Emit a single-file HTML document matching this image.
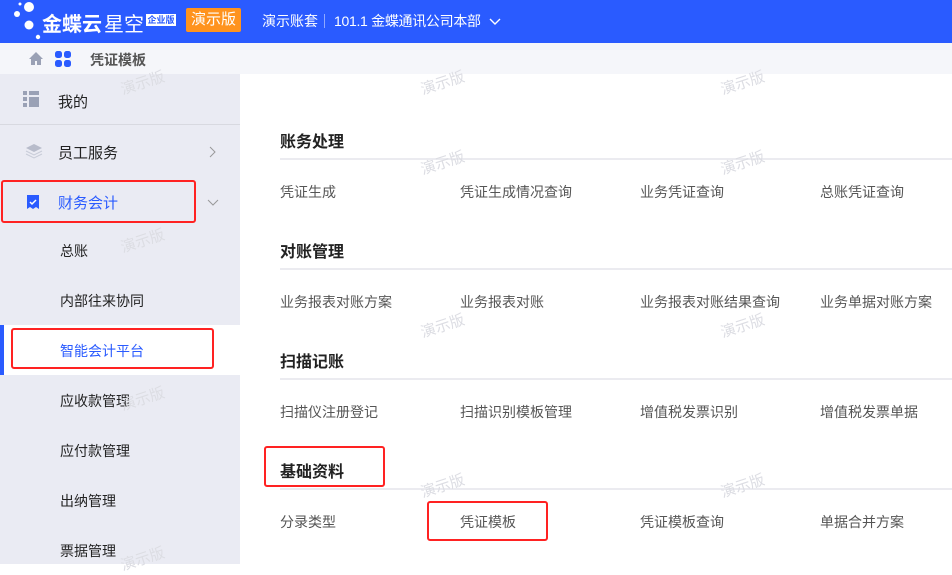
<!DOCTYPE html><html><head><meta charset="utf-8"><style>
*{margin:0;padding:0;box-sizing:border-box}
body{width:952px;height:564px;overflow:hidden;font-family:"Liberation Sans","Noto Sans CJK SC",sans-serif;background:#fff;position:relative}
.a{position:absolute;white-space:nowrap}
.hd{position:absolute;left:0;top:0;width:952px;height:43px;background:#2a5bff}
.bc{position:absolute;left:0;top:43px;width:952px;height:31px;background:#f5f6fa}
.sb{position:absolute;left:0;top:74px;width:240px;height:490px;background:#eaebf3}
.t{font-size:16px;font-weight:bold;color:#222}
.i{font-size:14px;color:#555}
.ln{position:absolute;left:280px;width:672px;height:2px;background:#ebebf0}
.s{font-size:14px;color:#222}
.red{position:absolute;border:2px solid #f22;border-radius:3px}
.wm{position:absolute;color:#dcdde3;font-size:15px;transform:rotate(-18deg)}
</style></head><body>
<div class="hd"></div>
<svg class="a" style="left:12px;top:0px" width="32" height="42"><circle cx="17" cy="7" r="5" fill="#fff"/><circle cx="5" cy="14" r="3" fill="#fff"/><circle cx="17" cy="25" r="4.5" fill="#fff"/><circle cx="26" cy="37" r="2.2" fill="#fff"/><circle cx="8" cy="4" r="1.5" fill="#fff"/></svg>
<div class="a" style="left:42px;top:8px;color:#fff;font-size:20px;font-weight:bold">金蝶云</div>
<div class="a" style="left:104px;top:8px;color:#fff;font-size:20px">星空</div>
<div class="a" style="left:146px;top:14px;width:30px;height:12px;background:#fff;color:#2a5bff;font-size:9px;line-height:12px;text-align:center;font-weight:bold">企业版</div>
<div class="a" style="left:186px;top:8px;width:55px;height:24px;background:#ff931e;border-radius:2px;color:#fff;font-size:15px;line-height:24px;text-align:center">演示版</div>
<div class="a" style="left:262px;top:11px;color:#fff;font-size:14px">演示账套</div>
<div class="a" style="left:324px;top:14px;width:1px;height:14px;background:#8fa8ff"></div>
<div class="a" style="left:334px;top:11px;color:#fff;font-size:14px;letter-spacing:-0.3px">101.1 金蝶通讯公司本部</div>
<svg class="a" style="left:489px;top:18px" width="12" height="8"><path d="M1 1l5 5 5-5" stroke="#fff" fill="none" stroke-width="1.4"/></svg>
<div class="bc"></div>
<svg class="a" style="left:28px;top:51px" width="16" height="15"><path d="M8 1L1 8h2v6h4v-4h2v4h4V8h2z" fill="#9aa1b5"/></svg>
<svg class="a" style="left:55px;top:51px" width="16" height="16" fill="#2a5bff"><rect x="0" y="0" width="7" height="7" rx="2.5"/><rect x="9" y="0" width="7" height="7" rx="2.5"/><rect x="0" y="9" width="7" height="7" rx="2.5"/><rect x="9" y="9" width="7" height="7" rx="2.5"/></svg>
<div class="a" style="left:90px;top:50px;font-size:14px;font-weight:bold;color:#555">凭证模板</div>
<div class="sb"></div>
<svg class="a" style="left:23px;top:91px" width="16" height="16" fill="#9aa1b5"><rect x="0" y="0" width="4" height="4"/><rect x="6" y="0" width="10" height="4"/><rect x="0" y="6" width="4" height="4"/><rect x="6" y="6" width="10" height="10"/><rect x="0" y="12" width="4" height="4"/></svg>
<div class="a s" style="left:58px;top:91px;font-size:15px">我的</div>
<div class="a" style="left:0;top:124px;width:240px;height:1px;background:#d8d9e0"></div>
<svg class="a" style="left:25px;top:143px" width="18" height="16"><path d="M9 1l8 4-8 4-8-4z" fill="#b8bccb"/><path d="M1 8l8 4 8-4M1 11l8 4 8-4" stroke="#c8ccd8" fill="none"/></svg>
<div class="a s" style="left:58px;top:142px;font-size:15px">员工服务</div>
<svg class="a" style="left:209px;top:146px" width="8" height="12"><path d="M1 1l5 5-5 5" stroke="#999" fill="none"/></svg>
<svg class="a" style="left:26px;top:194px" width="14" height="16"><path d="M1 1h12v14l-3-2-3 2-3-2-3 2z" fill="#2a5bff"/><path d="M4 8l2 2 4-4" stroke="#fff" fill="none" stroke-width="1.5"/></svg>
<div class="a" style="left:58px;top:192px;font-size:15px;color:#2a5bff">财务会计</div>
<svg class="a" style="left:207px;top:199px" width="12" height="8"><path d="M1 1l5 5 5-5" stroke="#999" fill="none"/></svg>
<div class="red" style="left:1px;top:180px;width:195px;height:43px"></div>
<div class="a s" style="left:60px;top:241px">总账</div>
<div class="a s" style="left:60px;top:291px">内部往来协同</div>
<div class="a" style="left:0;top:325px;width:240px;height:50px;background:#fff"></div>
<div class="a" style="left:0;top:325px;width:4px;height:50px;background:#2a5bff"></div>
<div class="a" style="left:60px;top:341px;font-size:14px;color:#2a5bff">智能会计平台</div>
<div class="red" style="left:11px;top:328px;width:203px;height:41px"></div>
<div class="a s" style="left:60px;top:391px">应收款管理</div>
<div class="a s" style="left:60px;top:441px">应付款管理</div>
<div class="a s" style="left:60px;top:491px">出纳管理</div>
<div class="a s" style="left:60px;top:541px">票据管理</div>

<div class="a t" style="left:280px;top:128px">账务处理</div><div class="ln" style="top:158px"></div>
<div class="a i" style="left:280px;top:182px">凭证生成</div><div class="a i" style="left:460px;top:182px">凭证生成情况查询</div><div class="a i" style="left:640px;top:182px">业务凭证查询</div><div class="a i" style="left:820px;top:182px">总账凭证查询</div>
<div class="a t" style="left:280px;top:238px">对账管理</div><div class="ln" style="top:268px"></div>
<div class="a i" style="left:280px;top:292px">业务报表对账方案</div><div class="a i" style="left:460px;top:292px">业务报表对账</div><div class="a i" style="left:640px;top:292px">业务报表对账结果查询</div><div class="a i" style="left:820px;top:292px">业务单据对账方案</div>
<div class="a t" style="left:280px;top:348px">扫描记账</div><div class="ln" style="top:378px"></div>
<div class="a i" style="left:280px;top:402px">扫描仪注册登记</div><div class="a i" style="left:460px;top:402px">扫描识别模板管理</div><div class="a i" style="left:640px;top:402px">增值税发票识别</div><div class="a i" style="left:820px;top:402px">增值税发票单据</div>
<div class="a t" style="left:280px;top:458px">基础资料</div><div class="ln" style="top:488px"></div>
<div class="red" style="left:264px;top:446px;width:121px;height:41px"></div>
<div class="a i" style="left:280px;top:512px">分录类型</div><div class="a i" style="left:460px;top:512px">凭证模板</div><div class="a i" style="left:640px;top:512px">凭证模板查询</div><div class="a i" style="left:820px;top:512px">单据合并方案</div>
<div class="red" style="left:427px;top:501px;width:121px;height:40px"></div>

<div class="wm" style="left:120px;top:72px">演示版</div><div class="wm" style="left:420px;top:72px">演示版</div><div class="wm" style="left:720px;top:72px">演示版</div>
<div class="wm" style="left:420px;top:152px">演示版</div><div class="wm" style="left:720px;top:152px">演示版</div>
<div class="wm" style="left:120px;top:230px">演示版</div>
<div class="wm" style="left:420px;top:315px">演示版</div><div class="wm" style="left:720px;top:315px">演示版</div>
<div class="wm" style="left:120px;top:388px">演示版</div>
<div class="wm" style="left:420px;top:475px">演示版</div><div class="wm" style="left:720px;top:475px">演示版</div>
<div class="wm" style="left:120px;top:548px">演示版</div>
</body></html>
